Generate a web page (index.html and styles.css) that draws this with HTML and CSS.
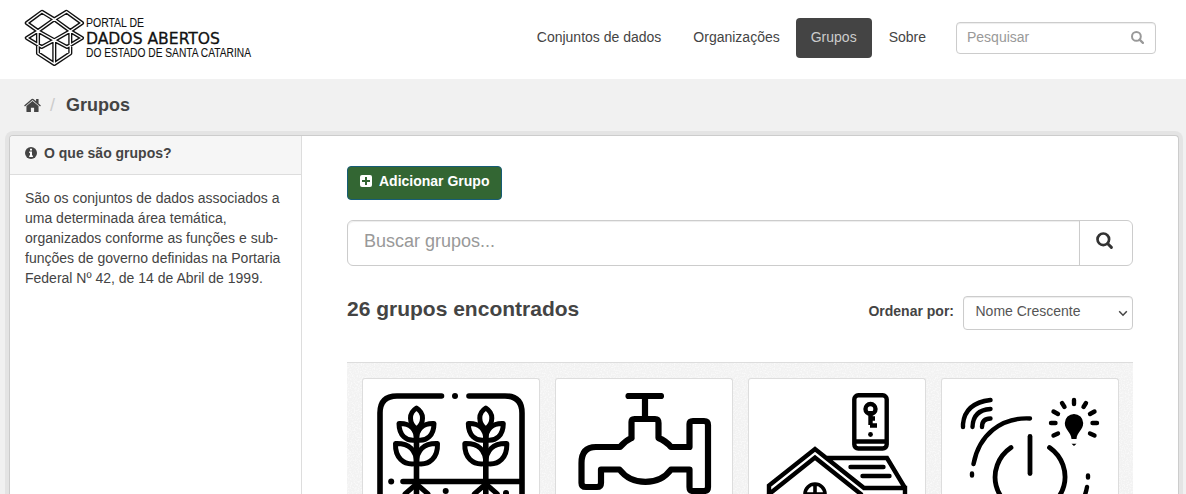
FILE: index.html
```html
<!DOCTYPE html>
<html lang="pt-BR">
<head>
<meta charset="utf-8">
<title>Grupos - Portal de Dados Abertos</title>
<link rel="stylesheet" href="styles.css">
</head>
<body>
<header class="masthead">
  <a class="brand">
    <svg class="brand-logo" viewBox="24 8 61 60" width="61" height="60" fill="none" stroke-linejoin="round">
      <defs><path id="box" d="M42 11.8 26.8 23 38 31 54.3 19.3ZM66.5 11.8 82 23 70.3 31 54.3 19.3ZM38 31 26.8 38 41.7 47 54.3 40.2ZM70.3 31 82 38 67 47 54.3 40.2ZM38 31V53.3L54.3 64 70.3 53.3V31M54.3 40.2V64"/></defs>
      <use href="#box" stroke="#111" stroke-width="4.1"/>
      <use href="#box" stroke="#fff" stroke-width="1.4"/>
    </svg>
    <svg class="brand-text" width="190" height="56" fill="#111">
      <text x="0" y="15" font-size="12" textLength="58" lengthAdjust="spacingAndGlyphs">PORTAL DE</text>
      <text class="brand-name" x="0" y="32" font-size="16.5" textLength="134" lengthAdjust="spacingAndGlyphs">DADOS ABERTOS</text>
      <text x="0" y="45" font-size="12" textLength="165" lengthAdjust="spacingAndGlyphs">DO ESTADO DE SANTA CATARINA</text>
    </svg>
  </a>
  <nav class="nav">
    <a class="nav-link">Conjuntos de dados</a>
    <a class="nav-link">Organizações</a>
    <a class="nav-link active">Grupos</a>
    <a class="nav-link">Sobre</a>
  </nav>
  <div class="site-search"><span>Pesquisar</span>
    <svg width="13" height="13" viewBox="0 0 13 13" fill="none" stroke="#999" stroke-width="2"><circle cx="5.4" cy="5.4" r="4.4"/><path d="m8.6 8.6 3.3 3.3" stroke-width="2.2" stroke-linecap="round"/></svg>
  </div>
</header>
<div class="toolbar">
  <svg width="17" height="15" viewBox="0 0 16 14" fill="#444"><path d="M8 2.8 13.7 7.5V12.6Q13.7 13.2 13.1 13.2H9.5V9.2H6.5V13.2H2.9Q2.3 13.2 2.3 12.6V7.5ZM11.4.8h2.3V5l2.2 1.9-.8 1L8 1.9.9 7.9l-.8-1L7.2.9Q8 .3 8.8.9l2.6 2.2Z"/></svg>
  <span class="slash">/</span>
  <strong>Grupos</strong>
</div>
<div class="wrapper">
  <aside class="sidebar">
    <h2 class="side-heading"><svg width="12" height="12" viewBox="0 0 12 12"><circle cx="6" cy="6" r="6" fill="#444"/><path d="M5 1.7h2v1.7H5ZM4.2 4.6H7V8.5h.9V10H4.2V8.5H5V6.1h-.8Z" fill="#fff"/></svg>O que são grupos?</h2>
    <p class="side-text">São os conjuntos de dados associados a uma determinada área temática, organizados conforme as funções e sub-funções de governo definidas na Portaria Federal Nº 42, de 14 de Abril de 1999.</p>
  </aside>
  <main class="primary">
    <a class="btn-add"><svg width="12" height="12" viewBox="0 0 12 12"><rect width="12" height="12" rx="2" fill="#fff"/><path d="M6 2v8M2 6h8" stroke="#363" stroke-width="2"/></svg>Adicionar Grupo</a>
    <div class="search">
      <div class="search-input">Buscar grupos...</div>
      <div class="search-button"><svg width="18" height="18" viewBox="0 0 18 18" fill="none" stroke="#333"><circle cx="7.3" cy="7.3" r="5.8" stroke-width="2.7"/><path d="m11.8 11.8 3.6 3.6" stroke-width="3" stroke-linecap="round"/></svg></div>
    </div>
    <div class="result-bar">
      <h1>26 grupos encontrados</h1>
      <label>Ordenar por:</label>
      <div class="select"><span>Nome Crescente</span><svg width="10" height="7" viewBox="0 0 10 7" fill="none" stroke="#444" stroke-width="1.5"><path d="m1.2 1.2 3.8 4 3.8-4"/></svg></div>
    </div>
    <div class="media-grid">
      <div class="card"><svg viewBox="377 393 148 148" fill="none" stroke="#000" stroke-width="5.6" stroke-linecap="round">
        <path d="M441.500 396H397Q380 396 380 413V538H522V413Q522 396 505 396H469M403 481.500H522"/>
        <g id="wheat" stroke-linejoin="round"><path d="M416.500 430V510"/><path d="M416.500 408C408.500 413 408.500 423 416.500 429C424.500 423 424.500 413 416.500 408Z" stroke-width="5"/><path d="M416.500 440C406 442 399 435 399 423.500C410 423 416.500 429 416.500 440C416.500 429 423 423 434 423.500C434 435 427 442 416.500 440Z" stroke-width="5"/><path d="M416.500 463.500C403 466 395 457 395.500 443.500C409 443 416.500 450 416.500 463.500C416.500 450 424 443 437.500 443.500C438 457 430 466 416.500 463.500Z" stroke-width="5"/><path d="m405 494 11.500-10 11.500 10" stroke-width="5"/></g>
        <use href="#wheat" x="69.300"/>
        <g fill="#000" stroke="none"><circle cx="455" cy="396" r="3"/><circle cx="391.200" cy="481.500" r="3"/><circle cx="445.700" cy="491" r="3"/><circle cx="506" cy="493" r="3"/></g>
      </svg></div>
      <div class="card"><svg viewBox="570 393 148 148" fill="none" stroke="#000" stroke-width="6.200" stroke-linecap="round" stroke-linejoin="round">
        <path d="M628.500 396H661M645 396V418M631.500 438V422Q631.500 419 634.500 419H655Q658.500 419 658.500 423V438Q666 441 671 447H689.500V424Q689.500 421 693 421H704Q708 421 708 425V487Q708 491 704 491H693Q689.500 491 689.500 487V469.500H671C659 486 632 486 619.500 469.500H601V483Q601 487 597 487H586Q581.500 487 581.500 483V463Q581.500 447 596 447H620Q625 441 631.500 438"/>
      </svg></div>
      <div class="card"><svg viewBox="763 393 148 148" fill="none" stroke="#000" stroke-width="4.400" stroke-linejoin="miter">
        <rect x="854.300" y="395.300" width="32.400" height="53.200" rx="4"/><path d="M854 441.500H887M870.500 411V425M870 425.500H877M870 418.500H875"/><circle cx="870.500" cy="409" r="5"/><circle cx="870.500" cy="434.500" r="2.400" fill="#000" stroke="none"/>
        <path d="M769 500V485.500L815 449 864 488H905V500M768 495 815 457.500 862 495M827 458H887L905 488"/>
        <path d="M850.500 467H883.500M862.500 476H889.500" stroke-linecap="round"/><path d="M805 494A10 10 0 0 1 825 494ZM815 483V495" stroke-width="3.600"/>
      </svg></div>
      <div class="card"><svg viewBox="956 393 148 148" fill="none" stroke="#000" stroke-width="4.400" stroke-linecap="round">
        <path d="M963 427V424Q965 403 990.500 400M972.500 427Q973 410 990.500 409M982 427Q982 418.500 990.500 418.500M973.500 464C979 435 1001 417 1030 418.500M972 473.500V475.500M1088 475.500V477.500M1087 487Q1086 493 1083 500" />
        <path d="M1030 436.500V473.500" stroke-width="4.800"/><path d="M1011 447.500C984 466 992 510 1030 510S1076 466 1049.500 447.500" stroke-width="4.800"/>
        <path d="M1074 400V404M1062 403 1064.500 407M1086 403 1083.500 407M1053.500 411.500 1058 414M1094.500 411.500 1090 414M1051 423H1055.500M1097 423H1092.500M1053.500 435.500 1058 433.500M1094.500 435.500 1090 433.500"/>
        <path d="M1074 414A9.200 9.200 0 0 1 1083.200 423C1083.200 430 1077 432 1076.500 439H1071.500C1071 432 1064.800 430 1064.800 423A9.200 9.200 0 0 1 1074 414ZM1071.500 443.700H1076.500L1074 446Z" fill="#000" stroke="none"/>
      </svg></div>
    </div>
  </main>
</div>
</body>
</html>
```
FILE: styles.css
```css
* { box-sizing: border-box; }
body { margin: 0; height: 494px; overflow: hidden; background: #f1f1f1; color: #444; font: 14px/20px "Helvetica Neue", Helvetica, "Liberation Sans", Arial, sans-serif; }
svg { flex-shrink: 0; }
h1, h2, p { margin: 0; }
.masthead { display: flex; align-items: flex-start; height: 79px; padding-right: 30px; background: #fff; }
.brand { display: flex; margin: 8px auto 0 24px; }
.brand-text { margin: 4px 0 0 1px; font-family: "Liberation Sans", Arial, sans-serif; stroke: #111; stroke-width: .1px; }
.brand-name { font-family: "DejaVu Sans", Verdana, sans-serif; stroke-width: .3px; }
.nav { display: flex; gap: 2px; margin-top: 18px; }
.nav-link { height: 40px; padding: 9px 15px; border-radius: 4px; }
.nav-link:nth-child(2) { padding-right: 14px; }
.nav-link.active { background: #444; color: #ccc; }
.site-search { display: flex; justify-content: space-between; width: 200px; height: 32px; margin: 22px 0 0 15px; padding: 4px 11px 0 10px; border: 1px solid #ccc; border-radius: 4px; box-shadow: inset 0 1px 1px rgba(0, 0, 0, .075); color: #999; }
.site-search svg { margin-top: 4px; }
.toolbar { display: flex; align-items: center; height: 56px; padding: 0 24px 4px; font-size: 18px; }
.slash { margin: 0 11px 0 9px; color: #ccc; }
.wrapper { display: flex; height: 359px; overflow: hidden; margin: 0 7px 0 9px; background: #fff; border: 1px solid #ccc; border-bottom: 0; border-radius: 4px 4px 0 0; box-shadow: 0 0 0 4px rgba(0, 0, 0, .05); }
.sidebar { flex: none; width: 292px; border-right: 1px solid #ddd; }
.side-heading { display: flex; gap: 7px; height: 39px; padding: 7px 15px; background: #f6f6f6; border-bottom: 1px solid #ddd; font-size: 14px; line-height: 20px; }
.side-heading svg { margin-top: 4px; }
.side-text { padding: 13px 15px; }
.primary { flex: 1; min-width: 0; padding: 30px 45px 0; }
.btn-add { display: flex; gap: 7px; width: 155px; height: 34px; padding: 4px 0 4px 12px; background: #363; border: 1px solid #165c76; border-radius: 4px; color: #fff; font-weight: bold; white-space: nowrap; }
.btn-add svg { margin-top: 4px; }
.search { display: flex; height: 46px; margin-top: 20px; border: 1px solid #ccc; border-radius: 6px; }
.search-input { flex: 1; padding: 10px 16px; box-shadow: inset 0 1px 1px rgba(0, 0, 0, .075); color: #999; font-size: 18px; border-radius: 6px 0 0 6px; }
.search-button { width: 53px; padding: 11px 16px; border-left: 1px solid #ccc; }
.result-bar { display: flex; height: 34px; margin-top: 30px; }
.result-bar h1 { margin-right: auto; font-size: 21px; line-height: 26px; }
.result-bar label { margin: 5px 9px 0 0; font-weight: bold; }
.select { display: flex; justify-content: space-between; width: 170px; height: 34px; padding: 4px 4px 0 11.5px; border: 1px solid #ccc; border-radius: 4px; box-shadow: inset 0 1px 1px rgba(0, 0, 0, .075); color: #555; }
.select svg { margin-top: 9px; }
.media-grid { display: flex; gap: 15px; height: 132px; overflow: hidden; margin-top: 32px; padding: 15px 14px 0 15px; border-top: 1px solid #ddd; background: #f2f2f2 url("data:image/svg+xml,%3Csvg xmlns='http://www.w3.org/2000/svg' width='100' height='100'%3E%3Cfilter id='n'%3E%3CfeTurbulence type='fractalNoise' baseFrequency='.7' numOctaves='2' stitchTiles='stitch'/%3E%3CfeColorMatrix values='0 0 0 0 1 0 0 0 0 1 0 0 0 0 1 4 0 0 0 -1.8'/%3E%3C/filter%3E%3Crect width='100' height='100' filter='url(%23n)' opacity='.5'/%3E%3C/svg%3E"); }
.card { flex: none; width: 178px; height: 117px; overflow: hidden; padding: 14px; background: #fff; border: 1px solid #ddd; border-bottom: 0; border-radius: 3px 3px 0 0; }
.card svg { display: block; width: 148px; height: 148px; }
```
